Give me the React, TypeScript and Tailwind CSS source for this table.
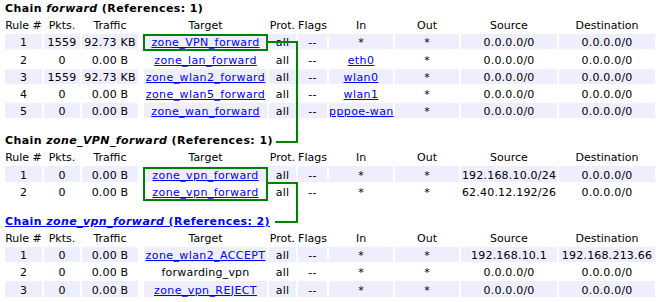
type Cell = string | { link: string }

interface Rule {
  pkts: string
  traffic: string
  target: Cell
  inIf: Cell
  source: string
  dest: string
}

interface Chain {
  name: string
  refs: number
  link?: boolean
  rules: Rule[]
}

const ANY = '0.0.0.0/0'

const CHAINS: Chain[] = [
  {
    name: 'forward',
    refs: 1,
    rules: [
      { pkts: '1559', traffic: '92.73 KB', target: { link: 'zone_VPN_forward' }, inIf: '*', source: ANY, dest: ANY },
      { pkts: '0', traffic: '0.00 B', target: { link: 'zone_lan_forward' }, inIf: { link: 'eth0' }, source: ANY, dest: ANY },
      { pkts: '1559', traffic: '92.73 KB', target: { link: 'zone_wlan2_forward' }, inIf: { link: 'wlan0' }, source: ANY, dest: ANY },
      { pkts: '0', traffic: '0.00 B', target: { link: 'zone_wlan5_forward' }, inIf: { link: 'wlan1' }, source: ANY, dest: ANY },
      { pkts: '0', traffic: '0.00 B', target: { link: 'zone_wan_forward' }, inIf: { link: 'pppoe-wan' }, source: ANY, dest: ANY },
    ],
  },
  {
    name: 'zone_VPN_forward',
    refs: 1,
    rules: [
      { pkts: '0', traffic: '0.00 B', target: { link: 'zone_vpn_forward' }, inIf: '*', source: '192.168.10.0/24', dest: ANY },
      { pkts: '0', traffic: '0.00 B', target: { link: 'zone_vpn_forward' }, inIf: '*', source: '62.40.12.192/26', dest: ANY },
    ],
  },
  {
    name: 'zone_vpn_forward',
    refs: 2,
    link: true,
    rules: [
      { pkts: '0', traffic: '0.00 B', target: { link: 'zone_wlan2_ACCEPT' }, inIf: '*', source: '192.168.10.1', dest: '192.168.213.66' },
      { pkts: '0', traffic: '0.00 B', target: 'forwarding_vpn', inIf: '*', source: ANY, dest: ANY },
      { pkts: '0', traffic: '0.00 B', target: { link: 'zone_vpn_REJECT' }, inIf: '*', source: ANY, dest: ANY },
    ],
  },
]

// column widths in px, target gets an extra left margin
const W = {
  rule: 'w-[37px]',
  pkts: 'w-[36px]',
  traffic: 'w-[56px]',
  target: 'w-[123px] ml-[4px]',
  prot: 'w-[27px]',
  flags: 'w-[29px]',
  inIf: 'w-[64px]',
  out: 'w-[64px]',
  source: 'w-[96px]',
  dest: 'w-[96px]',
}

function Txt({ value }: { value: Cell }) {
  if (typeof value === 'string') return <>{value}</>
  return <a className="text-[#0000ff] underline tracking-[0.4px]">{value.link}</a>
}

function Td({ w, shade, children }: { w: string; shade: boolean; children: React.ReactNode }) {
  return (
    <div
      className={`${w} shrink-0 h-[15.25px] pt-[2.4px] leading-[13px] text-center whitespace-nowrap tracking-[0.2px] ${shade ? 'bg-[#eeeeff]' : ''}`}
    >
      {children}
    </div>
  )
}

function ChainTable({ chain }: { chain: Chain }) {
  const heads: [string, string][] = [
    ['Rule #', W.rule],
    ['Pkts.', W.pkts],
    ['Traffic', W.traffic],
    ['Target', W.target],
    ['Prot.', W.prot],
    ['Flags', W.flags],
    ['In', W.inIf],
    ['Out', W.out],
    ['Source', W.source],
    ['Destination', W.dest],
  ]

  return (
    <div>
      <div
        className={`h-[17px] leading-[17px] font-bold whitespace-nowrap tracking-[0.4px] ${chain.link ? 'text-[#0000ff] underline' : ''}`}
      >
        Chain <em>{chain.name}</em> (References: {chain.refs})
      </div>
      <div className="flex gap-[2px] h-[17px] leading-[17px]">
        {heads.map(([h, w]) => (
          <div key={h} className={`${w} shrink-0 text-center whitespace-nowrap`}>
            {h}
          </div>
        ))}
      </div>
      <div className="flex flex-col gap-[2px]">
        {chain.rules.map((r, i) => {
          const shade = i % 2 === 0
          return (
            <div key={i} className="flex gap-[2px]">
              <Td w={W.rule} shade={shade}>{i + 1}</Td>
              <Td w={W.pkts} shade={shade}>{r.pkts}</Td>
              <Td w={W.traffic} shade={shade}>{r.traffic}</Td>
              <Td w={W.target} shade={shade}><Txt value={r.target} /></Td>
              <Td w={W.prot} shade={shade}>all</Td>
              <Td w={W.flags} shade={shade}>--</Td>
              <Td w={W.inIf} shade={shade}><Txt value={r.inIf} /></Td>
              <Td w={W.out} shade={shade}>*</Td>
              <Td w={W.source} shade={shade}>{r.source}</Td>
              <Td w={W.dest} shade={shade}>{r.dest}</Td>
            </div>
          )
        })}
      </div>
    </div>
  )
}

export default function App() {
  return (
    <div
      className="relative w-[656px] h-[302px] overflow-hidden bg-white text-black text-[11px] pl-[5px]"
      style={{ fontFamily: '"DejaVu Sans", Verdana, sans-serif' }}
    >
      <div className="flex flex-col gap-[14px]">
        {CHAINS.map((c) => (
          <ChainTable key={c.name} chain={c} />
        ))}
      </div>

      {/* green annotation: jump targets */}
      <div className="absolute left-[143px] top-[34px] w-[125px] h-[17px] border-2 border-[#008000]" />
      <div className="absolute left-[268px] top-[41px] w-[30px] h-[2px] bg-[#008000]" />
      <div className="absolute left-[296px] top-[41px] w-[2px] h-[102px] bg-[#008000]" />
      <div className="absolute left-[276px] top-[141px] w-[22px] h-[2px] bg-[#008000]" />

      <div className="absolute left-[143px] top-[167px] w-[125px] h-[34px] border-2 border-[#008000]" />
      <div className="absolute left-[268px] top-[182px] w-[30px] h-[2px] bg-[#008000]" />
      <div className="absolute left-[296px] top-[182px] w-[2px] h-[41px] bg-[#008000]" />
      <div className="absolute left-[275px] top-[221px] w-[23px] h-[2px] bg-[#008000]" />
    </div>
  )
}
